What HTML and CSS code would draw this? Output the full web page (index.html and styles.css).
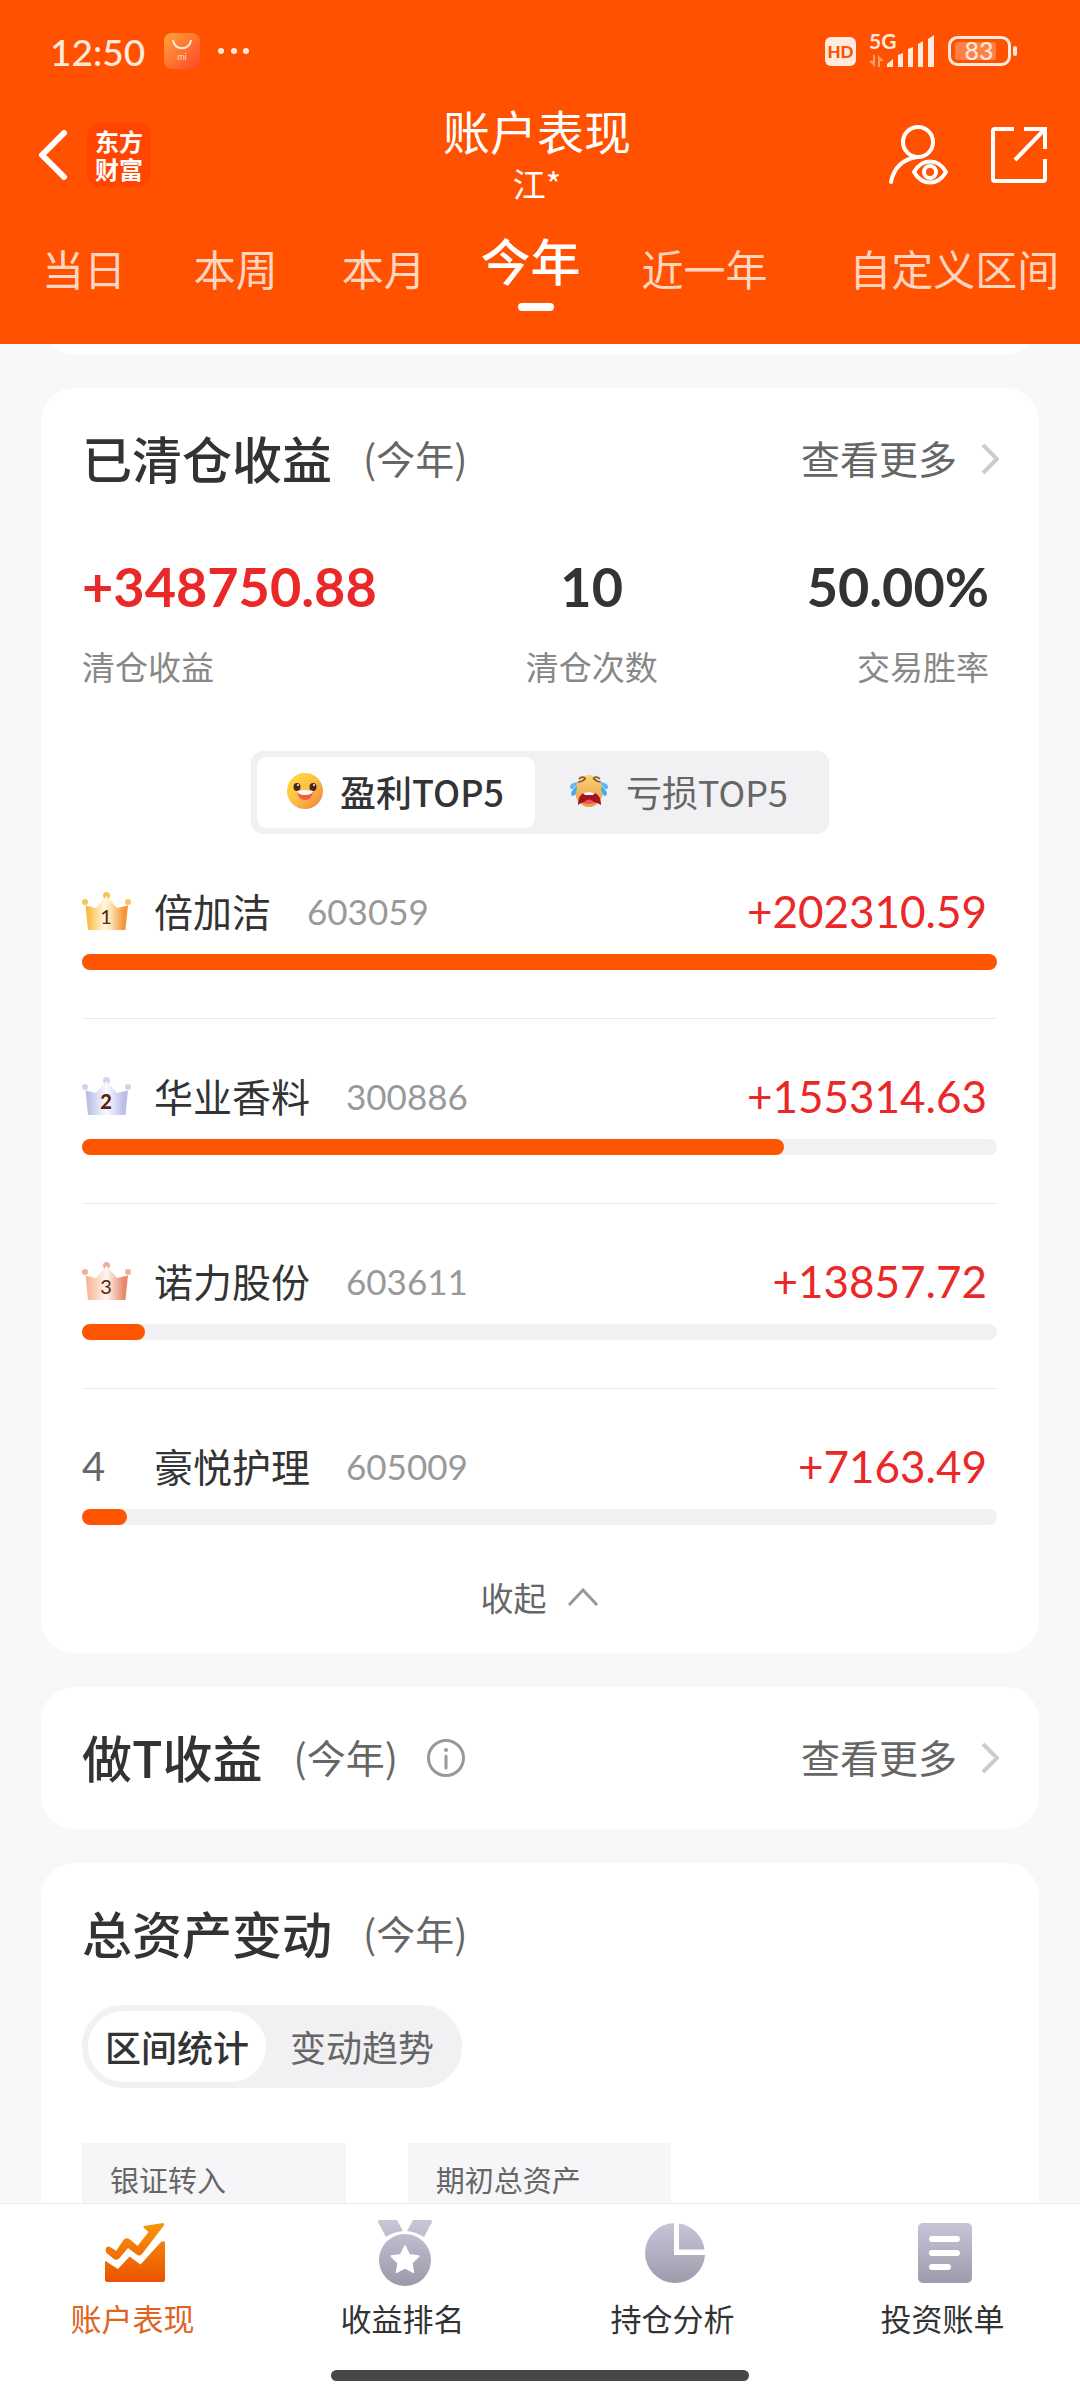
FILE: index.html
```html
<!DOCTYPE html>
<html lang="zh-CN">
<head>
    <meta charset="UTF-8">
    <meta name="viewport" content="width=device-width, initial-scale=1.0">
    <title>账户表现</title>
    <link rel="stylesheet" href="styles.css">
</head>
<body>
    <header class="header">
        <div class="status-bar">
            <span class="time">12:50</span>
            <svg class="mi-icon" width="36" height="36" viewBox="0 0 36 36">
                <defs>
                    <linearGradient id="mi" x1="0" y1="0" x2="1" y2="1">
                        <stop offset="0" stop-color="#ffa53a"/>
                        <stop offset="1" stop-color="#ff4426"/>
                    </linearGradient>
                </defs>
                <rect width="36" height="36" rx="8" fill="url(#mi)"/>
                <path d="M9 7c1 11 17 11 18 0" fill="none" stroke="#ffeadd" stroke-width="2"/>
                <text x="18" y="27" text-anchor="middle" font-size="9" fill="#ffd9c4">mi</text>
            </svg>
            <svg class="dots" width="32" height="8" viewBox="0 0 32 8" fill="#ffeadd">
                <circle cx="3" cy="4" r="3"/><circle cx="16" cy="4" r="3"/><circle cx="28" cy="4" r="3"/>
            </svg>
            <div class="status-right">
                <span class="hd">HD</span>
                <svg width="66" height="48" viewBox="0 -6 66 48" fill="#ffeadd">
                    <text x="0" y="16" font-size="21" font-weight="700">5G</text>
                    <g fill="#ff9a6a">
                        <path d="M4 22h2v12l-6-6h4z"/>
                        <path d="M9 34h2v-6h4l-6-6z"/>
                    </g>
                    <path d="M18 34v-3l6-5v8z"/>
                    <path d="M29 34V22l5-2v14z"/>
                    <path d="M39 34V16l5-2v20z"/>
                    <path d="M49 34V11l5-3v26z"/>
                    <path d="M59 34V6l6-4v32z"/>
                </svg>
                <svg width="70" height="30" viewBox="0 0 70 30">
                    <rect x="1.5" y="1.5" width="60" height="27" rx="8" fill="none" stroke="#ffeadd" stroke-width="3"/>
                    <rect x="7" y="6" width="41" height="18" rx="3" fill="#ff7f45"/>
                    <rect x="65" y="10" width="4" height="10" rx="2" fill="#ffeadd"/>
                    <text x="31" y="24" text-anchor="middle" font-size="25" font-weight="500" fill="#ffeadd">83</text>
                </svg>
            </div>
        </div>

        <div class="title-bar">
            <div class="title-left">
                <button class="icon-button" aria-label="返回">
                    <svg width="30" height="50" viewBox="0 0 30 50">
                        <path d="M26 3L4 25l22 22" fill="none" stroke="#fff" stroke-width="6" stroke-linecap="round" stroke-linejoin="round"/>
                    </svg>
                </button>
                <span class="brand">东方<br>财富</span>
            </div>
            <div class="title-center">
                <h1>账户表现</h1>
                <p>江*</p>
            </div>
            <div class="title-right">
                <button class="icon-button" aria-label="查看账户">
                    <svg width="60" height="60" viewBox="0 0 60 60" fill="none" stroke="#fff" stroke-width="4" stroke-linecap="round">
                        <circle cx="30" cy="17" r="15"/>
                        <path d="M3 57C6 42 16 34 29 32"/>
                        <path d="M26 47c8-14 24-14 32 0c-8 14-24 14-32 0z" stroke-linejoin="round"/>
                        <circle cx="42" cy="47" r="6"/>
                    </svg>
                </button>
                <button class="icon-button" aria-label="分享">
                    <svg width="56" height="56" viewBox="0 0 56 56" fill="none" stroke="#fff" stroke-width="4">
                        <path d="M23 2H4Q2 2 2 4V52Q2 54 4 54H52Q54 54 54 52V32"/>
                        <path d="M33 2H54V22M53 3L24 33"/>
                    </svg>
                </button>
            </div>
        </div>

        <nav class="tabs">
            <button class="tab">当日</button>
            <button class="tab">本周</button>
            <button class="tab">本月</button>
            <button class="tab active">今年</button>
            <button class="tab">近一年</button>
            <button class="tab">自定义区间</button>
        </nav>
    </header>

    <main class="content">
        <section class="card card-previous"></section>

        <!-- 已清仓收益 -->
        <section class="card">
            <div class="card-head">
                <h2>已清仓收益</h2>
                <span class="period">(今年)</span>
                <a class="more" href="#">
                    <span>查看更多</span>
                    <svg width="18" height="32" viewBox="0 0 18 32"><path d="M2 2l14 14L2 30" fill="none" stroke="#ccc" stroke-width="4"/></svg>
                </a>
            </div>

            <div class="stats">
                <div class="stat">
                    <strong class="red">+348750.88</strong>
                    <span>清仓收益</span>
                </div>
                <div class="stat center">
                    <strong>10</strong>
                    <span>清仓次数</span>
                </div>
                <div class="stat right">
                    <strong>50.00%</strong>
                    <span>交易胜率</span>
                </div>
            </div>

            <div class="switch">
                <button class="switch-item active">
                    <svg width="36" height="36" viewBox="0 0 36 36">
                        <defs>
                            <linearGradient id="smile" x1="0" y1="0" x2="1" y2="1">
                                <stop offset="0" stop-color="#ffe03a"/>
                                <stop offset="0.5" stop-color="#fdbe45"/>
                                <stop offset="1" stop-color="#ee7e3c"/>
                            </linearGradient>
                        </defs>
                        <circle cx="18" cy="18" r="18" fill="url(#smile)"/>
                        <ellipse cx="10" cy="14" rx="3.5" ry="4" fill="#4a2419"/>
                        <ellipse cx="26" cy="14" rx="3.5" ry="4" fill="#4a2419"/>
                        <circle cx="11" cy="12" r="1" fill="#fff"/>
                        <circle cx="27" cy="12" r="1" fill="#fff"/>
                        <path d="M10 18Q18 16 26 18Q25 27 18 27Q11 27 10 18z" fill="#f0603c"/>
                        <path d="M10 18Q18 16 26 18Q25 22 18 22Q11 22 10 18z" fill="#fff"/>
                    </svg>
                    盈利TOP5
                </button>
                <button class="switch-item">
                    <svg width="40" height="32" viewBox="0 0 40 32">
                        <defs>
                            <linearGradient id="cry" x1="0" y1="0" x2="0" y2="1">
                                <stop offset="0" stop-color="#fbd573"/>
                                <stop offset="1" stop-color="#e99a45"/>
                            </linearGradient>
                        </defs>
                        <ellipse cx="20" cy="16" rx="14" ry="16" fill="url(#cry)"/>
                        <path d="M9 30Q9 17 20 17Q32 17 32 30Q27 26 20 28Q13 26 9 30z" fill="#a3141f"/>
                        <path d="M14 18Q20 16 26 18L24 20H16z" fill="#fff"/>
                        <path d="M14 28Q20 21 26 28Q20 30 14 28z" fill="#ec5459"/>
                        <path d="M10 4q3-4 7 0M24 4q3-4 7 0M9 7q4 0 7-3M32 7q-4 0-7-3" fill="none" stroke="#7b5140" stroke-width="1.5"/>
                        <path d="M9 7Q0 8 1 13Q4 17 9 7z" fill="#5db9f5"/>
                        <path d="M8 11Q0 17 3 21Q8 21 8 11z" fill="#49a7ee"/>
                        <path d="M31 7Q40 8 39 13Q36 17 31 7z" fill="#5db9f5"/>
                        <path d="M32 11Q40 17 37 21Q32 21 32 11z" fill="#49a7ee"/>
                    </svg>
                    亏损TOP5
                </button>
            </div>

            <ol class="rank">
                <li>
                    <div class="rank-row">
                        <span class="rank-no">
                            <svg width="49" height="38" viewBox="0 0 49 38">
                                <defs>
                                    <linearGradient id="gold">
                                        <stop offset="0.05" stop-color="#fbbb3c"/>
                                        <stop offset="0.45" stop-color="#fff8e2"/>
                                        <stop offset="0.6" stop-color="#fde3b0"/>
                                        <stop offset="0.9" stop-color="#f3953d"/>
                                    </linearGradient>
                                </defs>
                                <g fill="#f7c45c"><circle cx="3" cy="10" r="3"/><circle cx="24.5" cy="3.5" r="3.5"/><circle cx="46" cy="10" r="3"/></g>
                                <path d="M3.5 13.5L14 16L24.5 4L35 16L46 13.5L43.5 38H6z" fill="url(#gold)"/>
                                <text x="24" y="32" text-anchor="middle" font-size="20" fill="#5b2413">1</text>
                            </svg>
                        </span>
                        <span class="name">倍加洁</span>
                        <span class="code">603059</span>
                        <span class="amount">+202310.59</span>
                    </div>
                    <div class="bar"><div class="bar-fill" style="width: 100%"></div></div>
                </li>
                <li>
                    <div class="rank-row">
                        <span class="rank-no">
                            <svg width="49" height="38" viewBox="0 0 49 38">
                                <defs>
                                    <linearGradient id="silver">
                                        <stop offset="0.05" stop-color="#b9bfe4"/>
                                        <stop offset="0.5" stop-color="#fbfbff"/>
                                        <stop offset="0.9" stop-color="#b9bde8"/>
                                    </linearGradient>
                                </defs>
                                <g fill="#cfd4f2"><circle cx="3" cy="10" r="3"/><circle cx="24.5" cy="3.5" r="3.5"/><circle cx="46" cy="10" r="3"/></g>
                                <path d="M3.5 13.5L14 16L24.5 4L35 16L46 13.5L43.5 38H6z" fill="url(#silver)"/>
                                <text x="24" y="32" text-anchor="middle" font-size="20" font-weight="900" fill="#5b2413">2</text>
                            </svg>
                        </span>
                        <span class="name">华业香料</span>
                        <span class="code">300886</span>
                        <span class="amount">+155314.63</span>
                    </div>
                    <div class="bar"><div class="bar-fill" style="width: 76.77%"></div></div>
                </li>
                <li>
                    <div class="rank-row">
                        <span class="rank-no">
                            <svg width="49" height="38" viewBox="0 0 49 38">
                                <defs>
                                    <linearGradient id="bronze">
                                        <stop offset="0.05" stop-color="#f7b797"/>
                                        <stop offset="0.5" stop-color="#fff6f0"/>
                                        <stop offset="0.9" stop-color="#e58a6b"/>
                                    </linearGradient>
                                </defs>
                                <g fill="#efb09b"><circle cx="3" cy="10" r="3"/><circle cx="24.5" cy="3.5" r="3.5"/><circle cx="46" cy="10" r="3"/></g>
                                <path d="M3.5 13.5L14 16L24.5 4L35 16L46 13.5L43.5 38H6z" fill="url(#bronze)"/>
                                <text x="24" y="32" text-anchor="middle" font-size="20" fill="#5b2413">3</text>
                            </svg>
                        </span>
                        <span class="name">诺力股份</span>
                        <span class="code">603611</span>
                        <span class="amount">+13857.72</span>
                    </div>
                    <div class="bar"><div class="bar-fill" style="width: 6.85%"></div></div>
                </li>
                <li>
                    <div class="rank-row">
                        <span class="rank-no">4</span>
                        <span class="name">豪悦护理</span>
                        <span class="code">605009</span>
                        <span class="amount">+7163.49</span>
                    </div>
                    <div class="bar"><div class="bar-fill" style="width: 4.9%"></div></div>
                </li>
            </ol>

            <button class="collapse">收起
                <svg width="32" height="18" viewBox="0 0 32 18"><path d="M2 17L16 2l14 15" fill="none" stroke="#999" stroke-width="3"/></svg>
            </button>
        </section>

        <!-- 做T收益 -->
        <section class="card">
            <div class="card-head">
                <h2>做T收益</h2>
                <span class="period">(今年)</span>
                <button class="icon-button info" aria-label="说明">
                    <svg width="38" height="38" viewBox="0 0 38 38">
                        <circle cx="19" cy="19" r="17.5" fill="none" stroke="#999" stroke-width="3"/>
                        <circle cx="19" cy="11" r="2" fill="#999"/>
                        <path d="M19 17v12" stroke="#999" stroke-width="3" stroke-linecap="round"/>
                    </svg>
                </button>
                <a class="more" href="#">
                    <span>查看更多</span>
                    <svg width="18" height="32" viewBox="0 0 18 32"><path d="M2 2l14 14L2 30" fill="none" stroke="#ccc" stroke-width="4"/></svg>
                </a>
            </div>
        </section>

        <!-- 总资产变动 -->
        <section class="card">
            <div class="card-head">
                <h2>总资产变动</h2>
                <span class="period">(今年)</span>
            </div>
            <div class="pill">
                <button class="pill-item active">区间统计</button>
                <button class="pill-item">变动趋势</button>
            </div>
            <div class="assets">
                <div class="asset">银证转入</div>
                <div class="asset">期初总资产</div>
            </div>
        </section>
    </main>

    <footer class="footer">
        <nav class="bottom-nav">
            <a class="nav-item active" href="#">
                <svg width="60" height="66" viewBox="0 0 60 66">
                    <defs>
                        <linearGradient id="fire" gradientUnits="userSpaceOnUse" x1="0" y1="0" x2="0" y2="60">
                            <stop offset="0" stop-color="#fb950a"/>
                            <stop offset="1" stop-color="#e95202"/>
                        </linearGradient>
                    </defs>
                    <g transform="translate(0 3)" fill="url(#fire)">
                        <path d="M39 3L58 0Q60 1 58.500 3L37 31Q34 34 31 31L23 25L14.500 35Q12 38 9 36L1.500 30Q-1 25 3 23.500Q5 23 11 28L18.500 17Q21 14 25 16.500L32.500 23L43.500 9L39 5Q38 3.500 39 3z"/>
                        <path d="M0 39Q0 37 2 39L13 46L24.500 33.500L35.500 41.500L56 19Q60 17 60 20V57Q60 59 58 59H2Q0 59 0 57z"/>
                    </g>
                </svg>
                <span>账户表现</span>
            </a>
            <a class="nav-item" href="#">
                <svg width="54" height="66" viewBox="0 0 54 66">
                    <defs>
                        <linearGradient id="grey" gradientUnits="userSpaceOnUse" x1="0" y1="0" x2="0" y2="66">
                            <stop offset="0" stop-color="#c8c7d9"/>
                            <stop offset="1" stop-color="#9b99aa"/>
                        </linearGradient>
                    </defs>
                    <path d="M1 0H19L25 11Q15 12 8 17L0 2Q0 0 1 0zM35 0H53Q54 0 54 2L46 17Q38 12 29 11z" fill="url(#grey)"/>
                    <circle cx="27" cy="40" r="26" fill="url(#grey)"/>
                    <path d="M27 26l4.200 8.700 9.600 1.400-6.900 6.800 1.600 9.500-8.500-4.500-8.500 4.500 1.600-9.500-6.900-6.800 9.600-1.400z" fill="#fff" stroke="#fff" stroke-width="1.500" stroke-linejoin="round"/>
                </svg>
                <span>收益排名</span>
            </a>
            <a class="nav-item" href="#">
                <svg width="60" height="66" viewBox="0 0 60 66">
                    <path d="M29 3A30 30 0 1 0 60 35H29z" fill="url(#grey)"/>
                    <path d="M34 3.500A30 30 0 0 1 59.500 29.500H34z" fill="url(#grey)"/>
                </svg>
                <span>持仓分析</span>
            </a>
            <a class="nav-item" href="#">
                <svg width="54" height="66" viewBox="0 0 54 66">
                    <rect y="3" width="54" height="60" rx="5" fill="url(#grey)"/>
                    <g fill="#fff">
                        <rect x="11" y="16" width="31" height="6" rx="3"/>
                        <rect x="11" y="30" width="31" height="6" rx="3"/>
                        <rect x="11" y="44" width="22" height="6" rx="3"/>
                    </g>
                </svg>
                <span>投资账单</span>
            </a>
        </nav>
        <div class="home-bar"></div>
    </footer>
</body>
</html>
```

FILE: styles.css
```css
:root {
    --primary-color: #ff5100;
    --bar-color: #ff5500;
    --red: #ea2828;
    --text: #333;
    --text-secondary: #666;
    --text-light: #999;
    --bg-color: #f7f8fa;
    --switch-bg: #f1f1f3;
    --number-font: Lato, 'Noto Sans CJK SC', sans-serif;
}

* {
    box-sizing: border-box;
}

body {
    font-family: 'Noto Sans CJK SC', sans-serif;
    margin: 0;
    height: 100vh;
    display: flex;
    flex-direction: column;
    background-color: var(--bg-color);
    color: var(--text);
}

h1, h2, p, ol {
    margin: 0;
    padding: 0;
}

button {
    font-family: inherit;
    border: none;
    background: none;
    padding: 0;
    color: inherit;
    cursor: pointer;
}

a {
    color: inherit;
    text-decoration: none;
}

svg {
    display: block;
    flex-shrink: 0;
}

svg text {
    font-family: var(--number-font);
}

/* 顶部 */
.header {
    flex-shrink: 0;
    background-color: var(--primary-color);
    color: white;
}

.status-bar {
    display: flex;
    align-items: center;
    height: 102px;
    padding: 0 62px 0 50px;
    color: #ffeadd;
}

.time {
    font-family: var(--number-font);
    font-size: 37px;
    font-weight: 500;
}

.mi-icon {
    margin-left: 19px;
}

.dots {
    margin-left: 18px;
}

.status-right {
    display: flex;
    align-items: center;
    gap: 13px;
    margin-left: auto;
}

.hd {
    width: 31px;
    height: 29px;
    border-radius: 6px;
    background-color: #ffeadd;
    color: var(--primary-color);
    font-family: var(--number-font);
    font-size: 17px;
    font-weight: 900;
    line-height: 29px;
    text-align: center;
}

.title-bar {
    display: grid;
    grid-template-columns: 1fr auto 1fr;
    align-items: center;
    height: 106px;
    padding: 0 33px 0 27px;
}

.title-left, .title-right {
    display: flex;
    align-items: center;
}

.title-left {
    gap: 19px;
    padding-left: 11px;
}

.title-right {
    gap: 43px;
    justify-content: flex-end;
}

.brand {
    width: 64px;
    height: 64px;
    padding: 4px 0;
    border-radius: 12px;
    background-color: #ff4500;
    font-size: 24px;
    font-weight: 700;
    line-height: 28px;
    text-align: center;
}

.title-center {
    text-align: center;
}

.title-center h1 {
    font-size: 47px;
    font-weight: 400;
    line-height: 56px;
}

.title-center p {
    font-size: 33px;
    line-height: 50px;
}

.tabs {
    display: grid;
    grid-template-columns: 152fr 148fr 139fr 161fr 208fr 211fr;
    height: 136px;
    padding: 0 20px 0 42px;
}

.tab {
    display: flex;
    flex-direction: column;
    align-items: flex-start;
    padding-top: 30px;
    color: #ffd5c0;
    font-size: 42px;
    line-height: 60px;
    white-space: nowrap;
}

.tab.active {
    padding-top: 21px;
    color: white;
    font-size: 50px;
    font-weight: 500;
}

.tab.active::after {
    content: '';
    width: 36px;
    height: 8px;
    margin: 14px 0 0 37px;
    border-radius: 4px;
    background-color: white;
}

/* 卡片 */
.content {
    flex: 1;
    min-height: 0;
    overflow-y: auto;
    scrollbar-width: none;
    padding: 0 41px;
}

.card {
    margin-bottom: 34px;
    padding: 0 42px 0 41px;
    border-radius: 33px;
    background-color: white;
}

.card-previous {
    height: 80px;
    margin-top: -70px;
}

.card-head {
    display: flex;
    align-items: center;
    height: 142px;
}

.card-head h2,
.card-head span {
    padding-bottom: 4px;
}

.card-head h2 {
    font-size: 50px;
    font-weight: 500;
}

.period {
    margin-left: 31px;
    color: var(--text-secondary);
    font-size: 39px;
}

.info {
    margin-left: 29px;
}

.more {
    display: flex;
    align-items: center;
    gap: 24px;
    margin: 0 -2px 0 auto;
    color: var(--text-secondary);
    font-size: 39px;
}

.stats {
    display: flex;
    justify-content: space-between;
    padding: 25px 8px 61px 0;
}

.stat {
    display: flex;
    flex-direction: column;
    gap: 23px;
}

.stat strong {
    font-family: var(--number-font);
    font-size: 54px;
    font-weight: 700;
    line-height: 64px;
}

.stat span {
    color: #888;
    font-size: 33px;
    line-height: 48px;
}

.stat .red {
    color: var(--red);
}

.center {
    text-align: center;
}

.right {
    text-align: right;
}

.switch {
    display: grid;
    grid-template-columns: 278fr 288fr;
    width: 578px;
    margin: 0 auto;
    padding: 6px;
    border-radius: 12px;
    background-color: var(--switch-bg);
}

.switch-item {
    display: flex;
    align-items: center;
    justify-content: center;
    gap: 17px;
    height: 71px;
    padding-bottom: 4px;
    border-radius: 10px;
    color: var(--text-secondary);
    font-size: 36px;
}

.switch-item.active {
    background-color: white;
    color: var(--text);
    font-weight: 500;
}

/* 排行 */
.rank {
    list-style: none;
}

.rank li {
    padding: 46px 0 48px;
    border-bottom: 1px solid #ebebeb;
}

.rank li:last-child {
    padding-bottom: 0;
    border-bottom: none;
}

.rank-row {
    display: flex;
    align-items: center;
    height: 62px;
    margin-bottom: 12px;
    padding-right: 10px;
}

.rank-no {
    width: 72px;
    color: var(--text-secondary);
    font-family: var(--number-font);
    font-size: 40px;
}

.name {
    padding-bottom: 2px;
    font-size: 39px;
}

.code {
    margin-left: 36px;
    color: var(--text-light);
    font-family: var(--number-font);
    font-size: 35px;
}

.amount {
    margin-left: auto;
    color: var(--red);
    font-family: var(--number-font);
    font-size: 44px;
}

.bar {
    height: 16px;
    border-radius: 8px;
    background-color: var(--switch-bg);
}

.bar-fill {
    height: 100%;
    border-radius: 8px;
    background-color: var(--bar-color);
}

.collapse {
    display: flex;
    align-items: center;
    justify-content: center;
    gap: 20px;
    width: 100%;
    height: 128px;
    padding-top: 15px;
    color: var(--text-secondary);
    font-size: 33px;
}

/* 总资产变动 */
.pill {
    display: flex;
    width: fit-content;
    padding: 6px;
    border-radius: 41px;
    background-color: var(--switch-bg);
}

.pill-item {
    height: 71px;
    padding: 0 22px 2px 24px;
    border-radius: 36px;
    color: var(--text-secondary);
    font-size: 36px;
}

.pill-item.active {
    padding: 0 17px 2px;
    background-color: white;
    color: var(--text);
    font-weight: 500;
}

.assets {
    display: grid;
    grid-template-columns: repeat(3, 1fr);
    gap: 62px;
    margin-top: 55px;
}

.asset {
    height: 160px;
    padding: 12px 28px;
    background-color: #f6f6f8;
    color: var(--text-secondary);
    font-size: 29px;
    line-height: 48px;
}

/* 底部导航 */
.footer {
    flex-shrink: 0;
    border-top: 1px solid #ebebeb;
    background-color: white;
}

.bottom-nav {
    display: grid;
    grid-template-columns: repeat(4, 1fr);
    padding-top: 16px;
}

.nav-item {
    display: flex;
    flex-direction: column;
    align-items: center;
    gap: 9px;
    font-size: 31px;
    line-height: 46px;
}

.nav-item span {
    padding-right: 5px;
}

.nav-item.active {
    color: #e0641f;
}

.home-bar {
    width: 418px;
    height: 11px;
    margin: 29px auto 19px;
    border-radius: 6px;
    background-color: #474747;
}
```
